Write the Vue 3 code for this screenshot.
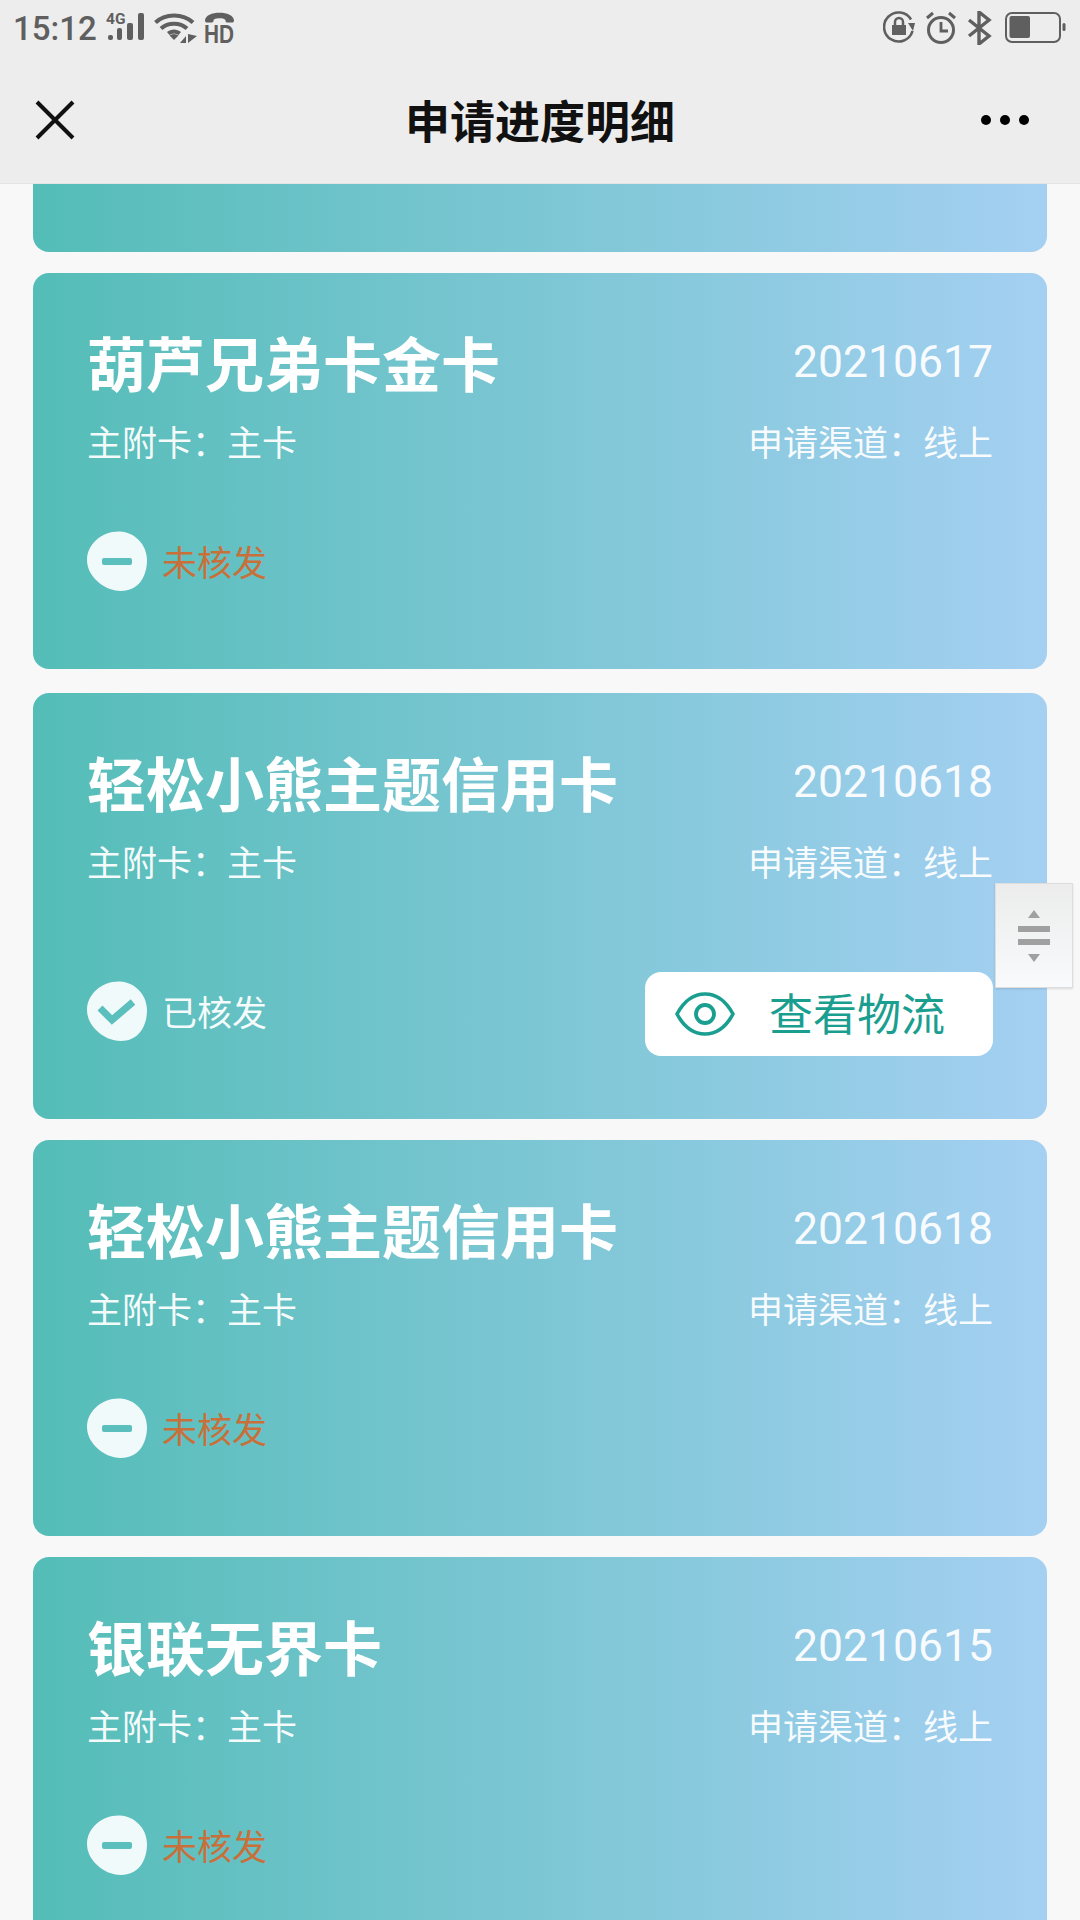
<script setup>
const cards = [
  { name: '葫芦兄弟卡金卡', date: '20210617', done: false },
  { name: '轻松小熊主题信用卡', date: '20210618', done: true },
  { name: '轻松小熊主题信用卡', date: '20210618', done: false },
  { name: '银联无界卡', date: '20210615', done: false }
]
</script>

<template>
  <div class="page">
    <header class="top">
      <div class="status">
        <div class="status-left">
          <span class="time">15:12</span>
          <svg class="sig" width="40" height="36" viewBox="0 0 40 36">
            <text x="0" y="15" class="net">4G</text>
            <rect x="2" y="26" width="5" height="5" rx="2" />
            <rect x="11" y="19" width="5" height="12" rx="2" />
            <rect x="21" y="14" width="6" height="17" rx="2" />
            <rect x="32" y="4" width="6" height="27" rx="2" />
          </svg>
          <svg class="wifi" width="44" height="32" viewBox="0 0 44 32">
            <g fill="none" stroke="#5f5f5f" stroke-width="4">
              <path d="M1.500 10.500C11 1 29 1 39 10.500" />
              <path d="M7 16.500C14 10 26 10 33 16.500" />
            </g>
            <path d="M13 20c4-3.500 10-3.500 14 0l-2.500 3c-3-2-6-2-9 0z" fill="#5f5f5f" />
            <path d="M15.500 23.500c3-2 6-2 9 0L20 28z" fill="#5f5f5f" />
            <path d="M26 31l6-7v7zM34 22v9l9-7z" fill="#5f5f5f" />
          </svg>
          <div class="hd">
            <svg width="32" height="12" viewBox="0 0 32 12">
              <path d="M1 9.500C1 -1 30 -1 30 9.500c0 1.500-1 2-2 2h-5c-1 0-1.500-1-1.500-2 0-3-12-3-12 0 0 1-.5 2-1.500 2H3c-1 0-2-.5-2-2z" fill="#5f5f5f" />
            </svg>
            <span class="hdtext">HD</span>
          </div>
        </div>
        <div class="status-right">
          <svg width="32" height="32" viewBox="0 0 32 32">
            <path d="M29.500 20A14.500 14.500 0 1 1 28 8.500" fill="none" stroke="#5f5f5f" stroke-width="2.600" />
            <path d="M25 12h7l-2 8z" fill="#5f5f5f" />
            <rect x="9" y="14" width="14" height="10" fill="#5f5f5f" />
            <path d="M12 14v-3a4 4 0 0 1 8 0v3" fill="none" stroke="#5f5f5f" stroke-width="2.500" />
          </svg>
          <svg width="30" height="34" viewBox="0 0 30 34">
            <circle cx="15" cy="19" r="12.500" fill="none" stroke="#5f5f5f" stroke-width="3" />
            <path d="M15 11v9h7" fill="none" stroke="#5f5f5f" stroke-width="2.800" />
            <path d="M1 7l6-5M29 7l-6-5" stroke="#5f5f5f" stroke-width="3" />
          </svg>
          <svg width="26" height="34" viewBox="0 0 26 34">
            <path d="M2 9l20 16-10 8V1l10 8L2 25" fill="none" stroke="#5f5f5f" stroke-width="3.400" />
          </svg>
          <svg class="battery" width="61" height="32" viewBox="0 0 61 32">
            <rect x="1" y="2" width="54" height="29" rx="6" fill="none" stroke="#5f5f5f" stroke-width="2" />
            <rect x="4.500" y="5" width="20.500" height="22" rx="2" fill="#5f5f5f" />
            <rect x="57.500" y="12" width="3" height="8" rx="1.500" fill="#5f5f5f" />
          </svg>
        </div>
      </div>
      <nav class="nav">
        <svg class="close" width="40" height="40" viewBox="0 0 40 40">
          <path d="M2 2l36 36M38 2L2 38" stroke="#111" stroke-width="4" fill="none" />
        </svg>
        <h1 class="title">申请进度明细</h1>
        <div class="more"><i></i><i></i><i></i></div>
      </nav>
    </header>

    <main class="list">
      <div class="card card-stub"></div>
      <section v-for="(c, i) in cards" :key="i" class="card">
        <div class="head">
          <h2 class="name">{{ c.name }}</h2>
          <span class="date">{{ c.date }}</span>
        </div>
        <div class="sub">
          <span>主附卡：主卡</span>
          <span>申请渠道：线上</span>
        </div>
        <div class="foot">
          <div class="state">
            <svg width="60" height="60" viewBox="0 0 60 60">
              <path d="M33 .5C47 1 60 13 60 29 60 46 51 60 34 60 25 60 16 56 9 49 3 43 0 36 0 29 0 13 15-.2 33 .5Z" fill="#f1fafa" />
              <path v-if="c.done" d="M13 27l12 12 21-18" fill="none" stroke="#5bbfbd" stroke-width="7" />
              <rect v-else x="15" y="27" width="30" height="7" rx="2" fill="#5bbfbd" />
            </svg>
            <span :class="c.done ? 'ok' : 'no'">{{ c.done ? '已核发' : '未核发' }}</span>
          </div>
          <button v-if="c.done" class="track">
            <svg width="60" height="44" viewBox="0 0 60 44">
              <path d="M2 22C9 9 19 2 30 2s21 7 28 20C51 35 41 42 30 42S9 35 2 22Z" fill="none" stroke="#1a9e90" stroke-width="3.600" />
              <circle cx="30" cy="22" r="9" fill="none" stroke="#1a9e90" stroke-width="3.800" />
            </svg>
            <span class="track-label">查看物流</span>
          </button>
        </div>
      </section>
    </main>

    <div class="handle">
      <i class="up"></i>
      <b></b>
      <b></b>
      <i class="down"></i>
    </div>
  </div>
</template>

<style scoped>
.page {
  position: relative;
  width: 1080px;
  height: 1920px;
  overflow: hidden;
  background: #f8f8f8;
  font-family: "Noto Sans CJK SC", "Roboto", sans-serif;
}
.top {
  height: 184px;
  background: #ededed;
  border-bottom: 1px solid #e4e4e4;
  box-sizing: border-box;
}
.status {
  height: 56px;
  padding: 0 14px 0 13px;
  display: flex;
  justify-content: space-between;
  align-items: flex-start;
}
.status-left {
  display: flex;
  align-items: flex-start;
  padding-top: 12px;
}
.time {
  font-family: Roboto, sans-serif;
  font-weight: 500;
  font-size: 33px;
  line-height: 33px;
  color: #5f5f5f;
  width: 93px;
}
.sig { fill: #5f5f5f; margin-top: -3px; }
.wifi { margin-left: 8px; }
.hd {
  margin-left: 6px;
  margin-top: -1px;
  width: 32px;
  display: flex;
  flex-direction: column;
}
.net {
  font-family: Roboto, sans-serif;
  font-weight: 700;
  font-size: 15.500px;
}
.hdtext {
  font-family: "Liberation Sans", sans-serif;
  font-weight: 700;
  font-size: 25px;
  line-height: 22px;
  color: #5f5f5f;
  transform: scaleX(.83);
  transform-origin: left center;
  white-space: nowrap;
}
.status-right {
  display: flex;
  align-items: flex-start;
  gap: 11px;
  padding-top: 11px;
}
.battery { margin-left: 1px; }
.nav {
  height: 128px;
  position: relative;
  display: flex;
  align-items: center;
  justify-content: space-between;
  padding: 0 51px 0 35px;
  box-sizing: border-box;
}
.close { flex: none; }
.title {
  position: absolute;
  left: 0;
  right: 0;
  margin: 0;
  text-align: center;
  font-size: 45px;
  font-weight: 700;
  color: #111;
  line-height: 60px;
}
.more {
  display: flex;
  gap: 9px;
}
.more i {
  width: 10px;
  height: 10px;
  border-radius: 50%;
  background: #000;
}
.list {
  padding: 0 33px;
  display: flex;
  flex-direction: column;
  gap: 21px;
}
.card {
  padding: 48px 54px 63px 54px;
  border-radius: 16px;
  background: linear-gradient(90deg, #54bdb7, #a5d0f2);
  color: #fff;
}
.card:nth-of-type(2) { margin-top: 3px; }
.card-stub {
  height: 68px;
  padding: 0;
  border-radius: 0 0 16px 16px;
  box-sizing: border-box;
}
.head {
  height: 80px;
  display: flex;
  justify-content: space-between;
  align-items: center;
}
.name {
  margin: 0;
  font-size: 59px;
  font-weight: 700;
  line-height: 80px;
  padding-top: 2px;
}
.date {
  font-family: Roboto, sans-serif;
  font-size: 44.500px;
  line-height: 50px;
  margin-top: 2px;
  color: rgba(255, 255, 255, .94);
}
.sub {
  margin-top: 15px;
  height: 50px;
  display: flex;
  justify-content: space-between;
  font-size: 35px;
  line-height: 50px;
  color: rgba(255, 255, 255, .94);
}
.foot {
  margin-top: 35px;
  min-height: 105px;
  display: flex;
  justify-content: space-between;
  align-items: flex-end;
}
.state {
  display: flex;
  align-items: center;
  gap: 15px;
  margin-bottom: 15px;
  font-size: 35px;
  line-height: 60px;
}
.no { color: #c9703a; }
.ok { color: rgba(255, 255, 255, .94); }
.track {
  margin-top: 51px;
  width: 348px;
  height: 84px;
  padding: 0 0 0 30px;
  border: 0;
  border-radius: 16px;
  background: #fff;
  display: flex;
  align-items: center;
  gap: 34px;
  font-family: inherit;
  font-size: 44px;
  color: #1a9e90;
}
.track-label { margin-top: -4px; }
.handle {
  position: absolute;
  left: 995px;
  top: 883px;
  width: 78px;
  height: 105px;
  box-sizing: border-box;
  border: 1px solid #dedede;
  background: linear-gradient(180deg, #ececec, #f8fafb);
  box-shadow: 0 1px 2px rgba(0, 0, 0, .12);
  display: flex;
  flex-direction: column;
  align-items: center;
  padding-top: 26px;
}
.handle i {
  width: 0;
  height: 0;
  border-left: 6px solid transparent;
  border-right: 6px solid transparent;
}
.handle .up { border-bottom: 8px solid #a0a0a0; margin-bottom: 8px; }
.handle .down { border-top: 8px solid #a0a0a0; margin-top: 9px; }
.handle b {
  width: 32px;
  height: 6px;
  background: #a0a0a0;
  margin-bottom: 7px;
}
.handle b:last-of-type { margin-bottom: 0; }
</style>
<style>
html, body { margin: 0; background: #f8f8f8; }
</style>
